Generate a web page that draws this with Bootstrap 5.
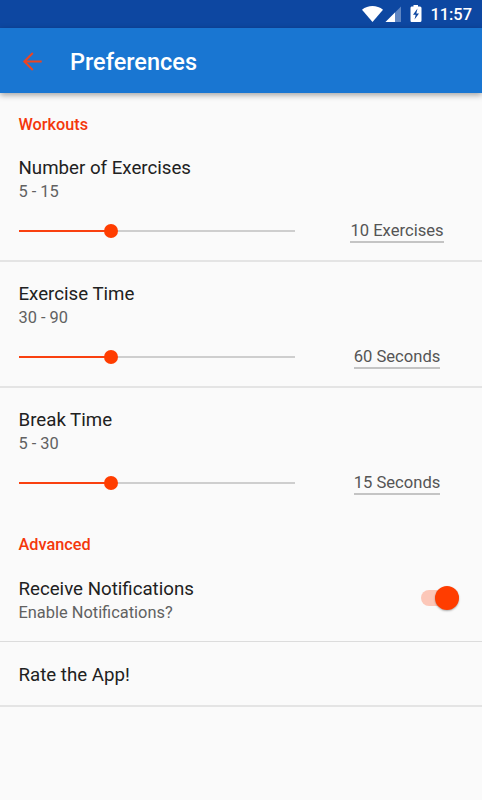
<!DOCTYPE html>
<html lang="en">
<head>
<meta charset="utf-8">
<meta name="viewport" content="width=device-width, initial-scale=1">
<title>Preferences</title>
<link href="https://cdn.jsdelivr.net/npm/bootstrap@5.3.0/dist/css/bootstrap.min.css" rel="stylesheet">
<style>
body{font-family:Roboto,sans-serif;background:#fafafa;color:#212121;height:800px;overflow:hidden}
.status-bar{height:28px;background:#0d47a1;color:#fff;font-size:16.4px;font-weight:500;padding-right:10px}
.status-bar svg,.app-bar svg{display:block;flex:none}
.clock{padding-top:2px}
.app-bar{height:65px;background:#1976d2;color:#fff;padding:2px 0 0 22px;box-shadow:0 2px 6px rgba(0,0,0,.36);position:relative}
.app-title{font-size:23.5px;font-weight:500;line-height:30px;margin-left:27px}
.section-title{color:#f4370b;font-size:16.3px;font-weight:500;line-height:20px;padding:22px 18.5px 0;height:43px}
.section-title.advanced{padding-top:21px;height:42px}
.pref{padding:20px 18px 0 18.5px;border-bottom:2px solid #e4e4e4}
.pref-slider{height:126px}
.pref-notify{height:86px;padding-top:21px;border-bottom:1px solid #dcdcdc}
.pref-rate{height:65px;padding-top:21px}
.pref-title{font-size:18.7px;line-height:24px}
.pref-sub{font-size:16.4px;line-height:23px;color:#616161}
.slider-row{height:22px;margin-top:17px}
.track{width:276.5px;height:2px;background:#cecece;flex:none}
.track-on{width:92px;height:2px;background:#f9400f}
.thumb{width:14px;height:14px;background:#ff3d00;margin-left:-7px;flex:none}
.value-col{width:132px;margin-left:36px;font-size:16.6px;line-height:20px;color:#555}
.value-col span{border-bottom:2px solid #c4c4c4;height:24px;padding-top:2px}
.switch{width:38px;height:16px;background:#fcc7b8}
.switch-wrap{height:41px;padding-right:5.5px}
.switch-knob{width:24px;height:24px;background:#ff3d00;box-shadow:0 1px 2px rgba(0,0,0,.32);flex:none}
</style>
</head>
<body>
<div class="status-bar d-flex align-items-center justify-content-end">
  <svg width="60" height="28" viewBox="0 0 60 28">
    <path d="M0 9.700C6 4.900 15 4.900 21 9.700L10.500 22Z" fill="#fff"/>
    <path d="M39 6.500V22H23.500Z" fill="#5f86c3"/>
    <path d="M33 12.500V22H23.500Z" fill="#fff"/>
    <path d="M49.500 6.500H51.500V5H56V6.500H58Q59.500 6.500 59.500 8V20.500Q59.500 22 58 22H49.500Q48.500 22 48.500 20.500V8Q48.500 6.500 49.500 6.500Z" fill="#fff"/>
    <path d="M55.500 8.500L51 14.700H53.700L52.500 19.500L57 13.400H54.300Z" fill="#0d47a1"/>
  </svg>
  <span class="clock ms-2">11:57</span>
</div>
<header class="app-bar d-flex align-items-center">
  <svg width="21" height="20" viewBox="0 0 21 20" fill="none" stroke="#ee4420" stroke-width="2"><path d="M19.700 9.500H3M10.800 1L2.300 9.500L10.800 18"/></svg>
  <h1 class="app-title mb-0">Preferences</h1>
</header>
<main>
  <h2 class="section-title mb-0">Workouts</h2>
  <section class="pref pref-slider">
    <div class="pref-title">Number of Exercises</div>
    <div class="pref-sub">5 - 15</div>
    <div class="slider-row d-flex align-items-center">
      <div class="track d-flex align-items-center"><div class="track-on"></div><div class="thumb rounded-circle"></div></div>
      <div class="value-col d-flex justify-content-center"><span>10 Exercises</span></div>
    </div>
  </section>
  <section class="pref pref-slider">
    <div class="pref-title">Exercise Time</div>
    <div class="pref-sub">30 - 90</div>
    <div class="slider-row d-flex align-items-center">
      <div class="track d-flex align-items-center"><div class="track-on"></div><div class="thumb rounded-circle"></div></div>
      <div class="value-col d-flex justify-content-center"><span>60 Seconds</span></div>
    </div>
  </section>
  <section class="pref pref-slider border-bottom-0">
    <div class="pref-title">Break Time</div>
    <div class="pref-sub">5 - 30</div>
    <div class="slider-row d-flex align-items-center">
      <div class="track d-flex align-items-center"><div class="track-on"></div><div class="thumb rounded-circle"></div></div>
      <div class="value-col d-flex justify-content-center"><span>15 Seconds</span></div>
    </div>
  </section>
  <h2 class="section-title advanced mb-0">Advanced</h2>
  <section class="pref pref-notify d-flex justify-content-between">
    <div>
      <div class="pref-title">Receive Notifications</div>
      <div class="pref-sub">Enable Notifications?</div>
    </div>
    <div class="switch-wrap d-flex align-items-center">
      <div class="switch rounded-pill d-flex align-items-center justify-content-end"><div class="switch-knob rounded-circle"></div></div>
    </div>
  </section>
  <section class="pref pref-rate"><div class="pref-title">Rate the App!</div></section>
</main>
<script src="https://cdn.jsdelivr.net/npm/bootstrap@5.3.0/dist/js/bootstrap.bundle.min.js"></script>
</body>
</html>
